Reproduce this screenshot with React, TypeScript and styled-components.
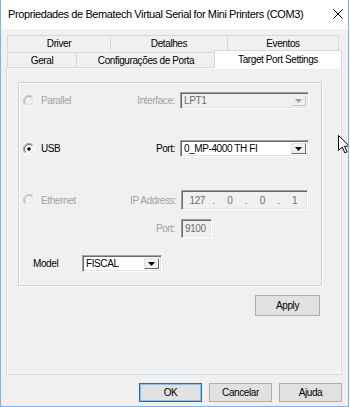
import React from "react";
import styled, { createGlobalStyle, css } from "styled-components";

const Global = createGlobalStyle`
  html, body { margin: 0; padding: 0; background: #ffffff; }
  body {
    font-family: "Liberation Sans", Arial, sans-serif;
    font-size: 10px;
    letter-spacing: -0.4px;
    color: #000;
  }
  * { box-sizing: border-box; }
`;

const Window = styled.div`
  position: relative;
  width: 349px;
  height: 407px;
  background: #f0f0f0;
  border: 1px solid #7eb4ea;
  border-top: none;
  display: flex;
  flex-direction: column;
  overflow: hidden;
`;

const TitleBar = styled.div`
  height: 29px;
  background: #ffffff;
  display: flex;
  align-items: center;
  justify-content: space-between;
  padding: 0 5px 1px 7px;
  flex-shrink: 0;
`;

const Title = styled.span`
  font-size: 11px;
  letter-spacing: -0.4px;
  color: #000;
`;

const Body = styled.div`
  padding: 6px 6px 0 5px;
  display: flex;
  flex-direction: column;
`;

const TabRow = styled.div`
  display: flex;
  align-items: flex-end;
  margin-left: 1px;
`;

const Tab = styled.div<{ $w: number; $h: number; $selected?: boolean }>`
  width: ${(p) => p.$w}px;
  height: ${(p) => p.$h}px;
  margin-left: -1px;
  border: 1px solid #d9d9d9;
  border-bottom: none;
  background: #f0f0f0;
  display: flex;
  align-items: center;
  justify-content: center;
  white-space: nowrap;
  &:first-child { margin-left: 0; }
  ${(p) =>
    p.$selected &&
    css`
      position: relative;
      z-index: 1;
      background: #ffffff;
      margin: 0 -2px -1px -2px;
      align-items: flex-start;
      padding-top: 3px;
    `}
`;

const Panel = styled.div`
  height: 308px;
  border: 1px solid #d9d9d9;
  box-shadow: inset 0 0 0 1px #fbfbfb;
  padding: 14px 19px 0 11px;
  display: flex;
  flex-direction: column;
`;

const Group = styled.div`
  height: 204px;
  border: 1px solid #d2d2d2;
  box-shadow: inset 1px 1px 0 #ffffff, 1px 1px 0 #ffffff;
  padding: 0 0 0 4px;
  display: flex;
  flex-direction: column;
`;

const FieldRow = styled.div<{ $h: number; $mt: number }>`
  display: grid;
  grid-template-columns: 102px 45px 129px;
  column-gap: 5px;
  align-items: center;
  height: ${(p) => p.$h}px;
  margin-top: ${(p) => p.$mt}px;
`;

const RadioLabel = styled.label<{ $disabled?: boolean }>`
  display: flex;
  align-items: center;
  gap: 6px;
  color: ${(p) => (p.$disabled ? "#a2a2a2" : "#000")};
`;

const FieldLabel = styled.span<{ $disabled?: boolean }>`
  text-align: right;
  color: ${(p) => (p.$disabled ? "#a2a2a2" : "#000")};
  white-space: nowrap;
`;

const sunken = css`
  border: 1px solid;
  border-color: #a0a0a0 #ffffff #ffffff #a0a0a0;
  box-shadow: inset 1px 1px 0 #696969, inset -1px -1px 0 #e3e3e3;
`;

const Combo = styled.div<{ $w: number; $disabled?: boolean }>`
  ${sunken};
  width: ${(p) => p.$w}px;
  height: 17px;
  display: flex;
  align-items: stretch;
  padding: 2px;
  background: ${(p) => (p.$disabled ? "#f0f0f0" : "#ffffff")};
  color: ${(p) => (p.$disabled ? "#6d6d6d" : "#000")};
`;

const ComboText = styled.span`
  flex: 1;
  display: flex;
  align-items: center;
  padding-left: 1px;
  white-space: nowrap;
  overflow: hidden;
`;

const ComboButton = styled.span<{ $disabled?: boolean }>`
  width: 15px;
  background: #f0f0f0;
  border: 1px solid;
  border-color: ${(p) =>
    p.$disabled ? "#f0f0f0 #c8c8c8 #c8c8c8 #f0f0f0" : "#e3e3e3 #696969 #696969 #e3e3e3"};
  display: flex;
  align-items: center;
  justify-content: center;
`;

const Input = styled.div<{ $w: number; $h: number }>`
  ${sunken};
  width: ${(p) => p.$w}px;
  height: ${(p) => p.$h}px;
  margin-left: 1px;
  background: #f0f0f0;
  color: #6d6d6d;
  display: flex;
  align-items: center;
  padding-left: 3px;
  white-space: nowrap;
`;

const IpSeg = styled.span<{ $w: number }>`
  width: ${(p) => p.$w}px;
  text-align: center;
`;

const ModelRow = styled.div`
  display: grid;
  grid-template-columns: 49px 80px;
  align-items: center;
  height: 17px;
  margin-top: 17px;
  padding-left: 10px;
`;

const ApplyRow = styled.div`
  display: flex;
  justify-content: flex-end;
  margin-top: 9px;
  padding-right: 2px;
`;

const Button = styled.button<{ $w: number; $h: number; $default?: boolean }>`
  width: ${(p) => p.$w}px;
  height: ${(p) => p.$h}px;
  font: inherit;
  letter-spacing: inherit;
  color: #000;
  background: #e1e1e1;
  border: 1px solid #adadad;
  padding: 0;
  display: flex;
  align-items: center;
  justify-content: center;
  ${(p) =>
    p.$default &&
    css`
      border-color: #0078d7;
      box-shadow: inset 0 0 0 1px rgba(0, 120, 215, 0.35);
    `}
`;

const Footer = styled.div`
  display: flex;
  justify-content: flex-end;
  gap: 7px;
  margin-top: 8px;
`;

const Cursor = styled.svg`
  position: absolute;
  left: 337px;
  top: 135px;
`;

const Radio = ({ checked, disabled }: { checked?: boolean; disabled?: boolean }) => (
  <svg width="12" height="12" viewBox="0 0 12 12">
    <circle cx="6" cy="6" r="4.5" fill={disabled ? "#f0f0f0" : "#ffffff"} />
    <path d="M2.11 9.89 A5.5 5.5 0 0 1 9.89 2.11" fill="none" stroke={disabled ? "#c6c6c6" : "#a0a0a0"} />
    <path d="M9.89 2.11 A5.5 5.5 0 0 1 2.11 9.89" fill="none" stroke="#ffffff" />
    <path d="M2.82 9.18 A4.5 4.5 0 0 1 9.18 2.82" fill="none" stroke={disabled ? "#b4b4b4" : "#696969"} />
    <path d="M9.18 2.82 A4.5 4.5 0 0 1 2.82 9.18" fill="none" stroke="#e3e3e3" />
    {checked && <circle cx="6" cy="6" r="1.8" fill="#000" />}
  </svg>
);

const Arrow = ({ disabled }: { disabled?: boolean }) => (
  <svg width="7" height="4" viewBox="0 0 7 4">
    <path d="M0 0 H7 L3.5 4 Z" fill={disabled ? "#a0a0a0" : "#000"} />
  </svg>
);

export default function App() {
  return (
    <>
      <Global />
      <Window>
        <TitleBar>
          <Title>Propriedades de Bematech Virtual Serial for Mini Printers (COM3)</Title>
          <svg width="10" height="10" viewBox="0 0 10 10">
            <path d="M0.5 0.5 L9.5 9.5 M9.5 0.5 L0.5 9.5" stroke="#000" strokeWidth="1" />
          </svg>
        </TitleBar>
        <Body>
          <TabRow>
            <Tab $w={104} $h={15}>Driver</Tab>
            <Tab $w={118} $h={15}>Detalhes</Tab>
            <Tab $w={112} $h={15}>Eventos</Tab>
          </TabRow>
          <TabRow>
            <Tab $w={70} $h={15}>Geral</Tab>
            <Tab $w={140} $h={15}>Configurações de Porta</Tab>
            <Tab $w={128} $h={18} $selected>Target Port Settings</Tab>
          </TabRow>
          <Panel>
            <Group>
              <FieldRow $h={17} $mt={9}>
                <RadioLabel $disabled>
                  <Radio disabled />
                  Parallel
                </RadioLabel>
                <FieldLabel $disabled>Interface:</FieldLabel>
                <Combo $w={129} $disabled>
                  <ComboText>LPT1</ComboText>
                  <ComboButton $disabled>
                    <Arrow disabled />
                  </ComboButton>
                </Combo>
              </FieldRow>
              <FieldRow $h={17} $mt={31}>
                <RadioLabel>
                  <Radio checked />
                  USB
                </RadioLabel>
                <FieldLabel>Port:</FieldLabel>
                <Combo $w={129}>
                  <ComboText>0_MP-4000 TH FI</ComboText>
                  <ComboButton>
                    <Arrow />
                  </ComboButton>
                </Combo>
              </FieldRow>
              <FieldRow $h={20} $mt={33}>
                <RadioLabel $disabled>
                  <Radio disabled />
                  Ethernet
                </RadioLabel>
                <FieldLabel $disabled>IP Address:</FieldLabel>
                <Input $w={127} $h={20}>
                  <IpSeg $w={25}>127</IpSeg>
                  <IpSeg $w={8}>.</IpSeg>
                  <IpSeg $w={25}>0</IpSeg>
                  <IpSeg $w={8}>.</IpSeg>
                  <IpSeg $w={25}>0</IpSeg>
                  <IpSeg $w={8}>.</IpSeg>
                  <IpSeg $w={25}>1</IpSeg>
                </Input>
              </FieldRow>
              <FieldRow $h={19} $mt={9}>
                <span />
                <FieldLabel $disabled>Port:</FieldLabel>
                <Input $w={31} $h={19}>9100</Input>
              </FieldRow>
              <ModelRow>
                <span>Model</span>
                <Combo $w={80}>
                  <ComboText>FISCAL</ComboText>
                  <ComboButton>
                    <Arrow />
                  </ComboButton>
                </Combo>
              </ModelRow>
            </Group>
            <ApplyRow>
              <Button $w={65} $h={21}>Apply</Button>
            </ApplyRow>
          </Panel>
          <Footer>
            <Button $w={63} $h={19} $default>OK</Button>
            <Button $w={63} $h={19}>Cancelar</Button>
            <Button $w={63} $h={19}>Ajuda</Button>
          </Footer>
        </Body>
        <Cursor width="13" height="19" viewBox="0 0 13 19">
          <path d="M0.5 0.5 V15.5 L4.2 12 L6.8 17.8 L9 16.8 L6.5 11.2 H11.5 Z" fill="#fff" stroke="#000" strokeWidth="1" strokeLinejoin="miter" />
        </Cursor>
      </Window>
    </>
  );
}
